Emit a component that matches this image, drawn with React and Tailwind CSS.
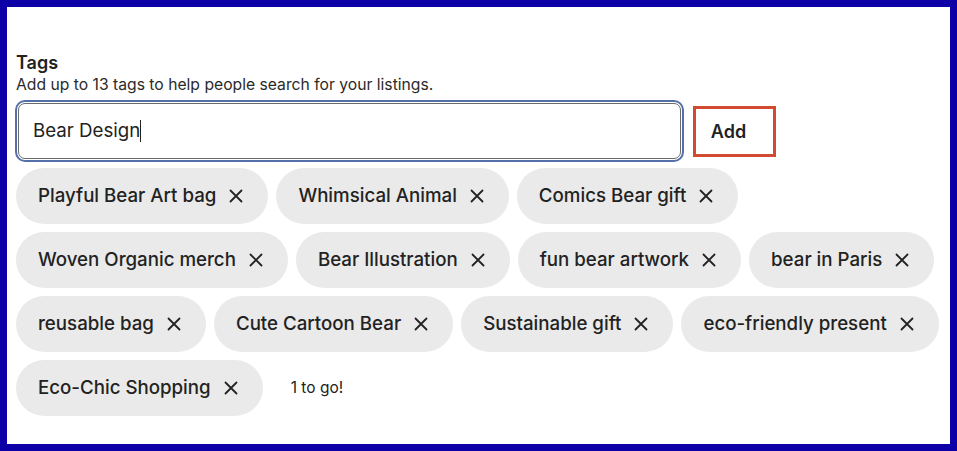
import React from 'react';

const tags = [
  'Playful Bear Art bag',
  'Whimsical Animal',
  'Comics Bear gift',
  'Woven Organic merch',
  'Bear Illustration',
  'fun bear artwork',
  'bear in Paris',
  'reusable bag',
  'Cute Cartoon Bear',
  'Sustainable gift',
  'eco-friendly present',
  'Eco-Chic Shopping',
];

const CloseIcon = () => (
  <svg width="16" height="16" viewBox="0 0 16 16" fill="none" stroke="#222" strokeWidth="1.8" strokeLinecap="round">
    <path d="M2.5 2.5l11 11M13.5 2.5l-11 11" />
  </svg>
);

const Tag = ({ label }) => (
  <div className="flex items-center h-[56px] pl-[22px] pr-[24px] rounded-full bg-[#eaeaea] gap-[12px]">
    <span className="text-[18.7px] font-medium text-[#222]">{label}</span>
    <CloseIcon />
  </div>
);

export default function App() {
  return (
    <div className="w-[957px] h-[451px] bg-[#0c00a6] p-[7px] font-['Inter',sans-serif]">
      <div className="bg-white h-full pt-[45px] pl-[9px] pr-[8px]">
        {/* heading */}
        <h2 className="text-[18px] font-semibold text-[#222] leading-[22px]">Tags</h2>
        <p className="text-[15.7px] text-[#2a2a2a] leading-[20px] mt-px">
          Add up to 13 tags to help people search for your listings.
        </p>

        {/* input row */}
        <div className="flex items-center gap-[9px] mt-[5px] -ml-px">
          <div className="w-[669px] h-[62px] rounded-[10px] border-2 border-[#5470a8] p-px">
            <div className="h-full rounded-[7px] border border-[#6b6b6b] flex items-center pl-[14px]">
              <span className="text-[18.7px] text-[#222]">Bear Design</span>
              <span className="w-px h-[22px] bg-[#222]" />
            </div>
          </div>
          <button className="w-[83px] h-[51px] border-[3px] border-[#d14b31] text-[18px] font-semibold text-[#222] pr-[12px]">
            Add
          </button>
        </div>

        {/* tag chips */}
        <div className="flex flex-wrap gap-[8px] mt-[6px] w-[932px]">
          {tags.map((t) => (
            <Tag key={t} label={t} />
          ))}
          <div className="flex items-center h-[56px] pl-[20px] text-[15.5px] text-[#222]">1 to go!</div>
        </div>
      </div>
    </div>
  );
}
